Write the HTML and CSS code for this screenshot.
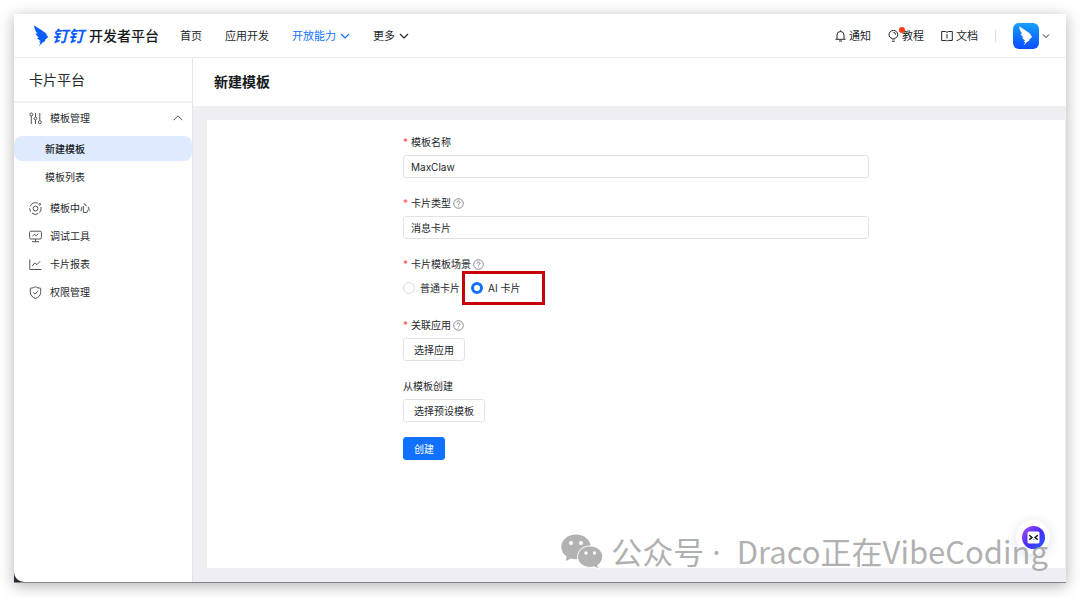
FILE: index.html
```html
<!DOCTYPE html>
<html lang="zh-CN">
<head>
    <meta charset="UTF-8">
    <meta name="viewport" content="width=device-width, initial-scale=1.0">
    <title>新建模板 - 钉钉开发者平台</title>
    <link rel="stylesheet" href="styles.css">
</head>
<body>
    <div class="window">
        <div class="window-body">
            <!-- Top bar -->
            <header class="topbar">
                <a class="logo" href="#">
                    <svg class="logo-mark" viewBox="0 0 15 22" aria-hidden="true">
                        <path d="M.2.2C3.500 2.800 8 5 11.800 8.200c.9.8 1 1.500.8 2.300L14.400 11.700 11.200 14.800 11 16.300 8.600 17.500 4.800 21.600 6.500 18.100 4.800 16.700 6.800 16.300 2.800 13 4.800 12.700 1.300 8.800 3.400 8.600C1.400 6 0 3.200.2.2Z" fill="#0a5cff"/>
                    </svg>
                    <span class="logo-brand">钉钉</span>
                    <span class="logo-name">开发者平台</span>
                </a>
                <nav class="nav">
                    <a href="#">首页</a>
                    <a href="#">应用开发</a>
                    <a class="active" href="#">开放能力
                        <svg width="10" height="10" viewBox="0 0 10 10"><path d="M1 3l4 4 4-4"/></svg>
                    </a>
                    <a href="#">更多
                        <svg width="10" height="10" viewBox="0 0 10 10"><path d="M1 3l4 4 4-4"/></svg>
                    </a>
                </nav>
                <div class="tools">
                    <a href="#">
                        <svg width="11" height="12" viewBox="0 0 11 12"><path d="M0.500 9.300h10M2 9V5a3.500 3.500 0 0 1 7 0V9M5.500 0.300v1.200M4 11h3"/></svg>
                        通知
                    </a>
                    <a class="has-dot" href="#">
                        <svg width="11" height="12" viewBox="0 0 11 12"><path d="M4 9V8.400C2.200 7.700 1 6.500 1 4.800a4.300 4.300 0 0 1 8.800 0C9.800 6.500 8.600 7.700 6.800 8.400V9zM4 11.200h2.800M5.400 2.400a2.200 2.200 0 0 1 2.200 2.200"/></svg>
                        教程
                    </a>
                    <a href="#">
                        <svg width="12" height="12" viewBox="0 0 12 12"><path d="M4.500 1.500H.7v9h3.800c.8 0 1 .2 1.500.6.500-.4.700-.6 1.500-.6h3.800v-9H7.500C6.700 1.500 6 2 6 2.700 6 2 5.300 1.500 4.500 1.500zM6 4v4.500"/></svg>
                        文档
                    </a>
                    <span class="divider"></span>
                    <button class="account" type="button" aria-label="账号">
                        <span class="avatar">
                            <svg width="14" height="20" viewBox="0 0 15 22"><path d="M.2.2C3.500 2.800 8 5 11.800 8.200c.9.8 1 1.500.8 2.300L14.400 11.700 11.200 14.800 11 16.300 8.600 17.500 4.800 21.600 6.500 18.100 4.800 16.700 6.800 16.300 2.800 13 4.800 12.700 1.300 8.800 3.400 8.600C1.400 6 0 3.200.2.2Z" fill="#fff"/></svg>
                        </span>
                        <svg class="caret" width="8" height="8" viewBox="0 0 8 8"><path d="M1 2.500l3 3 3-3"/></svg>
                    </button>
                </div>
            </header>

            <div class="layout">
                <!-- Sidebar -->
                <aside class="sidebar">
                    <h2>卡片平台</h2>
                    <ul class="menu">
                        <li>
                            <a href="#">
                                <svg width="13" height="13" viewBox="0 0 13 13"><circle cx="2.300" cy="2.500" r="1.500"/><path d="M2.300 4v8M6.500 1v4M6.500 8v4M10.800 1v7.500"/><circle cx="6.500" cy="6.500" r="1.300"/><circle cx="10.800" cy="10.200" r="1.500"/></svg>
                                模板管理
                                <svg class="arrow" width="10" height="8" viewBox="0 0 10 8"><path d="M0.700 6.200L5 1.800l4.300 4.400"/></svg>
                            </a>
                            <ul class="submenu">
                                <li><a class="selected" href="#">新建模板</a></li>
                                <li><a href="#">模板列表</a></li>
                            </ul>
                        </li>
                        <li>
                            <a href="#">
                                <svg width="13" height="13" viewBox="0 0 13 13"><circle cx="6.500" cy="6.500" r="2.400"/><path d="M1.200 4.200A5.800 5.800 0 0 1 8.800 1.100M12 5a5.800 5.800 0 0 1-1.500 5.600M9.300 11.600A5.800 5.800 0 0 1 3 11.200M1.700 9.700A5.800 5.800 0 0 1 0.700 6.300"/><circle cx="10.800" cy="2.300" r="0.900"/></svg>
                                模板中心
                            </a>
                        </li>
                        <li>
                            <a href="#">
                                <svg width="13" height="13" viewBox="0 0 13 13"><rect x="0.600" y="1.200" width="11.800" height="7.800" rx="1.300"/><path d="M3.500 6.300l1.800-2 1.800 1.500 2.300-2.200M6.500 9v2.500M3 11.700h7"/></svg>
                                调试工具
                            </a>
                        </li>
                        <li>
                            <a href="#">
                                <svg width="13" height="13" viewBox="0 0 13 13"><path d="M0.800 1.500v10h11.700M3.200 8l2.500-3 2.300 1.700 3-3.400"/></svg>
                                卡片报表
                            </a>
                        </li>
                        <li>
                            <a href="#">
                                <svg width="13" height="13" viewBox="0 0 13 13"><path d="M6.500 0.700c1.500 1 3.200 1.500 5.200 1.600v4c0 3-2 5-5.200 6.200C3.300 11.300 1.300 9.300 1.300 6.300v-4C3.300 2.200 5 1.700 6.500 0.700zM4.200 6.400l1.800 1.700 3-3"/></svg>
                                权限管理
                            </a>
                        </li>
                    </ul>
                </aside>

                <!-- Page content -->
                <main class="content">
                    <h1>新建模板</h1>
                    <div class="card">
                        <form class="form">
                            <div class="field">
                                <label class="required" for="name">模板名称</label>
                                <input class="text" id="name" type="text" value="MaxClaw">
                            </div>
                            <div class="field">
                                <label class="required" for="type">卡片类型
                                    <svg class="help" viewBox="0 0 11 11"><circle cx="5.500" cy="5.500" r="4.800"/><path d="M4 4.400a1.500 1.500 0 1 1 2.300 1.200c-.5.300-.8.600-.8 1.100M5.500 7.700v.8"/></svg>
                                </label>
                                <input class="text" id="type" type="text" value="消息卡片">
                            </div>
                            <div class="field" role="radiogroup" aria-labelledby="scene">
                                <div class="label required" id="scene">卡片模板场景
                                    <svg class="help" viewBox="0 0 11 11"><circle cx="5.500" cy="5.500" r="4.800"/><path d="M4 4.400a1.500 1.500 0 1 1 2.300 1.200c-.5.300-.8.600-.8 1.100M5.500 7.700v.8"/></svg>
                                </div>
                                <div class="radios">
                                    <label class="radio"><input type="radio" name="scene">普通卡片</label>
                                    <label class="radio marked"><input type="radio" name="scene" checked>AI 卡片</label>
                                </div>
                            </div>
                            <div class="field">
                                <label class="required" for="app">关联应用
                                    <svg class="help" viewBox="0 0 11 11"><circle cx="5.500" cy="5.500" r="4.800"/><path d="M4 4.400a1.500 1.500 0 1 1 2.300 1.200c-.5.300-.8.600-.8 1.100M5.500 7.700v.8"/></svg>
                                </label>
                                <button class="btn" id="app" type="button">选择应用</button>
                            </div>
                            <div class="field">
                                <label for="preset">从模板创建</label>
                                <button class="btn" id="preset" type="button">选择预设模板</button>
                            </div>
                            <button class="btn primary" type="submit">创建</button>
                        </form>
                    </div>
                </main>
            </div>
        </div>

        <button class="assistant" type="button" aria-label="智能助手">
            <svg width="23" height="23" viewBox="0 0 23 23">
                <defs>
                    <linearGradient id="ring" x1="0" y1="0" x2="1" y2="1">
                        <stop offset="0.100" stop-color="#9a45f5"/>
                        <stop offset="0.500" stop-color="#4a2cff"/>
                        <stop offset="1" stop-color="#1f5cff"/>
                    </linearGradient>
                </defs>
                <circle cx="11.500" cy="11.500" r="11.500" fill="url(#ring)"/>
                <rect x="5.500" y="5.500" width="12" height="12" rx="1.500" fill="#fff"/>
                <path d="M7.300 9.300l2.600 2.200-2.600 2.200M15.700 9.300l-2.600 2.200 2.600 2.200" fill="none" stroke="#111" stroke-width="1.500"/>
                <path d="M10.500 13.800l1-1.300 1 1.300z" fill="#1f7cff"/>
            </svg>
        </button>

        <!-- Watermark -->
        <div class="watermark">
            <svg width="42" height="36" viewBox="0 0 42 36">
                <path d="M15 .5C6.700.5.300 6 .300 13c0 4 2 7.200 5.300 9.500L4.800 27l5-2.600c1.700.5 3.400.8 5.200.8C23.300 25.200 29.700 20 29.700 13S23.300.5 15 .5z" fill="#b2b2b2"/>
                <path d="M29 12c-7 0-12.500 4.700-12.500 10.700S22 33.400 29 33.400c1.500 0 3-.2 4.300-.7l4.200 2.300-.7-3.800c3-2 4.900-5 4.900-8.500C41.700 16.700 36 12 29 12z" fill="#b2b2b2" stroke="#fff" stroke-width="1"/>
                <g fill="#fff"><circle cx="10" cy="9" r="2"/><circle cx="20" cy="9" r="2"/><circle cx="25" cy="19" r="1.700"/><circle cx="33.500" cy="19" r="1.700"/></g>
            </svg>
            <span>公众号<span class="middot"> ·&nbsp; </span>Draco正在VibeCoding</span>
        </div>
    </div>
</body>
</html>
```
FILE: styles.css
```css
* {
    box-sizing: border-box;
}

body {
    margin: 0;
    padding: 14px;
    background: #fff;
    color: #24272b;
    font-family: Inter, "Noto Sans CJK SC", sans-serif;
    font-size: 10px;
    line-height: 20px;
}

a {
    color: inherit;
    text-decoration: none;
}

button,
input {
    font: inherit;
    color: inherit;
}

ul {
    margin: 0;
    padding: 0;
    list-style: none;
}

svg {
    flex: none;
}

/* Window */
.window {
    position: relative;
    display: flex;
    min-height: calc(100vh - 28px);
    background: #2b2d36;
    border-bottom: 1px solid #85858b;
    box-shadow: 0 3px 14px rgba(0, 0, 0, 0.3);
}

.window-body {
    flex: 1;
    min-width: 0;
    display: flex;
    flex-direction: column;
    background: #fff;
    border-bottom-left-radius: 10px;
}

/* Top bar */
.topbar {
    display: flex;
    align-items: center;
    height: 44px;
    padding: 0 16px 0 20px;
    border-bottom: 1px solid #ebebed;
    font-size: 11px;
}

.logo {
    display: flex;
    align-items: center;
    gap: 3px;
    margin-right: 21px;
    color: #171a1d;
    font-weight: 700;
}

.logo-mark {
    width: 15px;
    height: 22px;
}

.logo-brand {
    width: 34px;
    color: #0a5cff;
    font-size: 16px;
    font-style: italic;
    white-space: nowrap;
}

.logo-name {
    font-size: 14px;
    font-weight: 500;
}

.nav,
.tools {
    display: flex;
    align-items: center;
}

.nav {
    gap: 23px;
}

.nav a,
.tools a {
    display: flex;
    align-items: center;
    gap: 4px;
}

.nav .active {
    color: #1071ff;
}

.nav path,
.tools a path,
.caret path,
.menu svg,
.help {
    fill: none;
    stroke: currentColor;
}

.nav path {
    stroke-width: 1.2;
}

.tools {
    gap: 17px;
    margin-left: auto;
}

.tools a {
    gap: 3px;
}

.has-dot {
    position: relative;
}

.has-dot::after {
    content: "";
    position: absolute;
    top: 1px;
    left: 11px;
    width: 6px;
    height: 6px;
    border-radius: 50%;
    background: #ff3b14;
}

.divider {
    width: 1px;
    height: 12px;
    background: #dcdcde;
}

.account {
    display: flex;
    align-items: center;
    gap: 3px;
    padding: 0;
    border: 0;
    background: none;
}

.avatar {
    display: flex;
    align-items: center;
    justify-content: center;
    width: 26px;
    height: 26px;
    border-radius: 6px;
    background: linear-gradient(#16a0ff, #0a4cff);
}

/* Layout */
.layout {
    flex: 1;
    display: flex;
}

.sidebar {
    flex: none;
    width: 179px;
    border-right: 1px solid #e3e3e8;
}

.sidebar h2 {
    margin: 0;
    padding: 0 15px;
    border-bottom: 2px solid #f0f0f1;
    font-size: 14px;
    font-weight: 400;
    line-height: 43px;
}

.menu {
    padding-top: 1px;
}

.menu a {
    display: flex;
    align-items: center;
    gap: 8px;
    height: 28px;
    padding: 0 9px 0 15px;
}

.menu svg {
    color: #50545a;
}

.menu .arrow {
    margin-left: auto;
}

.submenu {
    display: grid;
    gap: 3px;
    padding: 4px 0 5px;
}

.menu .submenu a {
    height: 25px;
    padding-left: 31px;
}

.submenu .selected {
    border-radius: 8px;
    background: #deebff;
    color: #171a1d;
    font-weight: 500;
}

/* Content */
.content {
    flex: 1;
    min-width: 0;
    display: flex;
    flex-direction: column;
    background: #eeeef3;
}

.content h1 {
    margin: 0;
    padding: 0 21px;
    background: #fff;
    color: #171a1d;
    font-size: 14px;
    font-weight: 700;
    line-height: 48px;
}

.card {
    flex: 1;
    margin: 14px 1px 14px 14px;
    padding: 12px 24px;
    background: #fff;
}

.form {
    max-width: 466px;
    margin: 0 auto;
}

.field {
    margin-bottom: 15px;
}

.field > label,
.field > .label {
    display: flex;
    align-items: center;
    gap: 2px;
    margin-bottom: 3px;
}

.required::before {
    content: "*";
    width: 6px;
    color: #ff4d4f;
}

.help {
    width: 11px;
    height: 11px;
    color: #6d7075;
    stroke-width: 0.8;
}

.text {
    display: block;
    width: 100%;
    height: 23px;
    padding: 0 7px;
    border: 1px solid #e2e2e4;
    border-radius: 3px;
    background: #fff;
}

.radios {
    display: flex;
    gap: 11px;
    height: 22px;
    margin-bottom: 16px;
}

.radio {
    display: flex;
    align-items: center;
    gap: 5px;
}

.radio input {
    appearance: none;
    width: 12px;
    height: 12px;
    margin: 0;
    border: 1px solid #d9d9d9;
    border-radius: 50%;
    background: #fff;
}

.radio input:checked {
    border: 3px solid #1071ff;
}

.marked {
    position: relative;
}

/* Red outline around the option to pick */
.marked::after {
    content: "";
    position: absolute;
    top: -6px;
    left: -9px;
    box-sizing: border-box;
    width: 83px;
    height: 34px;
    border: 3px solid #c7000b;
}

.btn {
    display: block;
    height: 23px;
    padding: 0 10px;
    border: 1px solid #e2e2e4;
    border-radius: 3px;
    background: #fff;
    line-height: 20px;
}

.primary {
    border-color: #1071ff;
    background: #1071ff;
    color: #fff;
}

/* Floating items */
.assistant {
    position: absolute;
    right: 16px;
    bottom: 28px;
    display: flex;
    align-items: center;
    justify-content: center;
    width: 34px;
    height: 34px;
    padding: 0;
    border: 0;
    border-radius: 50%;
    background: #fff;
    box-shadow: 0 2px 12px rgba(40, 60, 120, 0.16);
}

.watermark {
    position: absolute;
    right: 18px;
    bottom: 10px;
    display: flex;
    align-items: center;
    gap: 8px;
    color: rgba(150, 150, 150, 0.75);
    font-family: "Noto Sans CJK SC", sans-serif;
    font-size: 31px;
    line-height: 40px;
    white-space: nowrap;
    pointer-events: none;
}

.middot {
    font-family: "Noto Sans", sans-serif;
}
```
